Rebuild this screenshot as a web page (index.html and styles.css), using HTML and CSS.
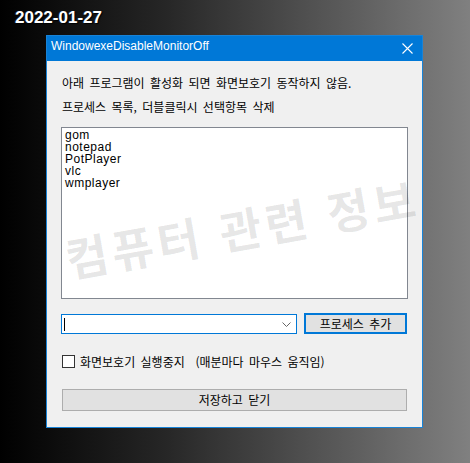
FILE: index.html
```html
<!DOCTYPE html>
<html lang="ko">
<head>
    <meta charset="UTF-8">
    <meta name="viewport" content="width=device-width, initial-scale=1.0">
    <title>WindowexeDisableMonitorOff</title>
    <link rel="stylesheet" href="styles.css">
</head>
<body>
    <div class="date">2022-01-27</div>
    <div class="window">
        <div class="titlebar">
            <span class="title">WindowexeDisableMonitorOff</span>
            <svg class="close" width="11" height="11" viewBox="0 0 11 11">
                <path d="M0.5 0.5 L10.5 10.5 M10.5 0.5 L0.5 10.5" stroke="#fff" stroke-width="1.1" fill="none"/>
            </svg>
        </div>
        <div class="content">
            <p class="info">아래 프로그램이 활성화 되면 화면보호기 동작하지 않음.</p>
            <p class="info">프로세스 목록, 더블클릭시 선택항목 삭제</p>
            <ul class="listbox">
                <li>gom</li>
                <li>notepad</li>
                <li>PotPlayer</li>
                <li>vlc</li>
                <li>wmplayer</li>
            </ul>
            <div class="add-row">
                <div class="combo">
                    <span class="caret"></span>
                    <svg class="chevron" width="9" height="6" viewBox="0 0 9 6">
                        <path d="M0.5 0.5 L4.5 4.5 L8.5 0.5" stroke="#666" stroke-width="1" fill="none"/>
                    </svg>
                </div>
                <button class="btn btn-focus">프로세스 추가</button>
            </div>
            <label class="check">
                <input type="checkbox">
                <span>화면보호기 실행중지&nbsp; (매분마다 마우스 움직임)</span>
            </label>
            <button class="btn btn-save">저장하고 닫기</button>
        </div>
        <div class="watermark">컴퓨터 관련 정보</div>
    </div>
</body>
</html>
```

FILE: styles.css
```css
* {
    box-sizing: border-box;
}
body {
    margin: 0;
    height: 463px;
    overflow: hidden;
    background: linear-gradient(to right, #000 0%, #262626 35%, #808080 100%);
    font-family: "Noto Sans CJK KR", "Liberation Sans", sans-serif;
}
.date {
    height: 35px;
    padding: 9px 0 0 15px;
    color: #fff;
    font: bold 17px/17px "Liberation Sans", Arial, sans-serif;
    text-shadow: 1px 1px 1px #000, -1px 0 1px #1a2a55;
}
.window {
    position: relative;
    margin-left: 46px;
    width: 377px;
    height: 393px;
    border: 1px solid #1883d7;
    background-color: #f0f0f0;
}
.titlebar {
    display: flex;
    justify-content: space-between;
    height: 25px;
    background-color: #0078d7;
}
.title {
    padding-left: 4px;
    color: #fff;
    font: 12px/21px "Liberation Sans", Arial, sans-serif;
}
.close {
    margin: 7px 9px 0 0;
}
.content {
    padding: 10px 14px 0 14px;
    font-size: 12px;
    color: #000;
    word-spacing: 2px;
}
.info {
    margin: 0;
    padding-left: 1px;
    line-height: 24px;
}
.listbox {
    list-style: none;
    margin: 8px 0 0 0;
    padding: 1px 3px;
    height: 172px;
    background-color: #fff;
    border: 1px solid #828790;
    font: 12px/12px "Liberation Sans", Arial, sans-serif;
    letter-spacing: 0.5px;
    word-spacing: 0;
}
.add-row {
    display: flex;
    gap: 7px;
    margin-top: 15px;
}
.combo {
    position: relative;
    width: 236px;
    height: 20px;
    background-color: #fff;
    border: 1px solid #0078d7;
}
.caret {
    position: absolute;
    left: 2px;
    top: 3px;
    width: 1px;
    height: 13px;
    background-color: #000;
}
.chevron {
    position: absolute;
    right: 5px;
    top: 7px;
}
.btn {
    font-family: "Noto Sans CJK KR", sans-serif;
    font-size: 12px;
    color: #000;
    background-color: #e1e1e1;
    border: 1px solid #adadad;
    padding: 0;
    line-height: 1;
    word-spacing: 2px;
}
.btn-focus {
    width: 103px;
    height: 21px;
    margin-top: -1px;
    border: 2px solid #0078d7;
}
.check {
    display: flex;
    align-items: center;
    gap: 5px;
    margin: 21px 0 0 1px;
    height: 13px;
}
.check input {
    appearance: none;
    margin: 0;
    width: 13px;
    height: 13px;
    border: 1px solid #333;
    background-color: #fff;
}
.btn-save {
    display: block;
    width: 345px;
    height: 22px;
    margin: 21px 0 0 1px;
}
.watermark {
    position: absolute;
    left: 195px;
    top: 191px;
    transform: translate(-50%, -50%) rotate(-10deg);
    white-space: nowrap;
    font-size: 46px;
    font-weight: bold;
    letter-spacing: 4px;
    color: rgba(0, 0, 0, 0.1);
    pointer-events: none;
}
```
